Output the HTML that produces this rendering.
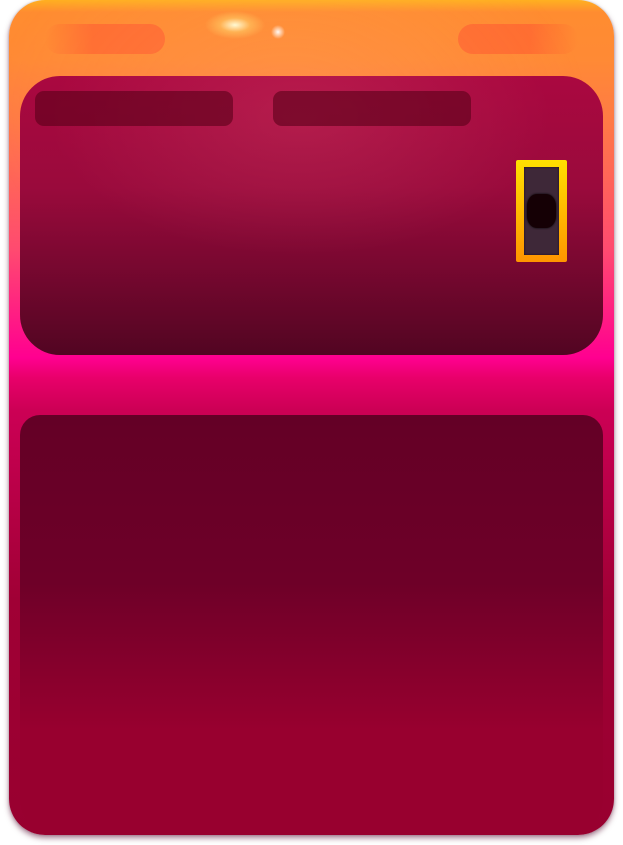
<!DOCTYPE html>
<html><head><meta charset="utf-8"><style>
html,body{margin:0;padding:0;width:623px;height:845px;background:#fff;overflow:hidden;position:relative;font-family:"Liberation Sans",sans-serif}
.card{position:absolute;left:9px;top:0;width:605px;height:835px;border-radius:36px;
background:linear-gradient(180deg,#ffb020 0px,#ff8c30 12px,#ff8a35 60px,#ff7a45 120px,#ff4a70 250px,#ff0090 358px,#e8006a 378px,#cc0055 410px,#a00035 600px,#98002f 835px);
box-shadow:0 3px 6px rgba(80,0,40,.5),0 0 2px rgba(0,0,0,.2)}
.glow{position:absolute;left:9px;top:0;width:605px;height:360px;border-radius:36px;pointer-events:none;
background:radial-gradient(ellipse 30px 14px at 226px 25px,rgba(255,255,220,.95),rgba(255,230,120,.4) 50%,transparent 100%),
radial-gradient(circle 7px at 269px 32px,rgba(255,255,255,.95),transparent),
radial-gradient(ellipse 300px 200px at 280px 110px,rgba(255,180,140,.18),transparent)}
.pill{position:absolute;top:24px;height:30px;border-radius:15px}
.top{position:absolute;left:20px;top:76px;width:583px;height:279px;border-radius:40px;
background:radial-gradient(ellipse 250px 140px at 280px 40px,rgba(255,120,140,.18),transparent),linear-gradient(180deg,#aa0840 0%,#9a0a3c 40%,#520522 100%)}
.bar{position:absolute;top:91px;height:35px;width:198px;border-radius:9px;background:rgba(90,0,25,.6)}
.low{position:absolute;left:20px;top:415px;width:583px;height:420px;border-radius:20px 20px 36px 36px;
background:linear-gradient(180deg,#640026 0%,#6e0028 40%,#98002f 75%,#98002f 100%)}
.sw{position:absolute;left:516px;top:160px;width:51px;height:102px;box-sizing:border-box;background:linear-gradient(#ffe000,#ff9500);border-radius:2px}
.sw .in{position:absolute;left:8px;top:7px;width:35px;height:88px;background:#3e2838;box-shadow:inset 0 0 2px #1a0a20}
.sw .k{position:absolute;left:3px;top:27px;width:29px;height:34px;border-radius:10px/12px;background:#150005;box-shadow:0 0 2px #000}
</style></head><body>
<div class="card"></div>
<div class="pill" style="left:45px;width:120px;background:linear-gradient(90deg,rgba(255,109,48,0),#ff6d30 40%)"></div>
<div class="pill" style="left:458px;width:120px;background:linear-gradient(270deg,rgba(255,109,48,0),#ff6d30 40%)"></div>
<div class="glow"></div>
<div class="top"></div>
<div class="bar" style="left:35px"></div>
<div class="bar" style="left:273px"></div>
<div class="sw"><div class="in"><div class="k"></div></div></div>
<div class="low"></div>
</body></html>
